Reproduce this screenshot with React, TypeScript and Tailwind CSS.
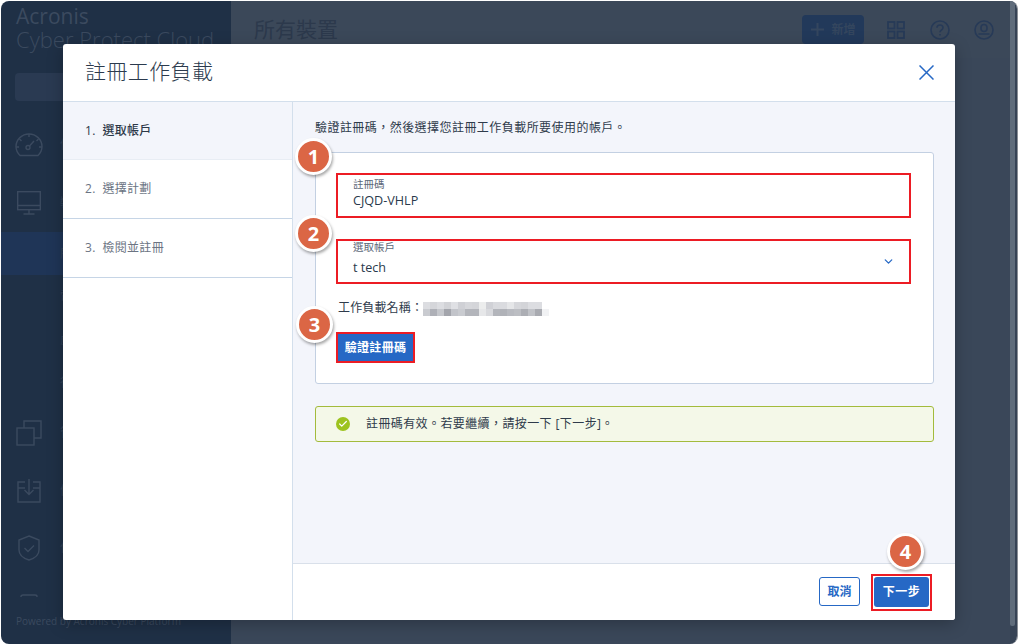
import type { ReactNode } from 'react';
import { ChevronDown, Check } from 'lucide-react';

const STEPS = [
  { label: '1.  選取帳戶', active: true, h: 'h-[58px]' },
  { label: '2.  選擇計劃', active: false, h: 'h-[59px]' },
  { label: '3.  檢閱並註冊', active: false, h: 'h-[59px]' },
];

const BLUR_TOP = [
  '#dcdde1', '#d5d6da', '#dcdde1', '#d2d3d7', '#dfe0e4', '#cfd0d5', '#d6d7db', '#d4d5d9', '#eceded',
  '#d0d1d6', '#d9dade', '#dadbdf', '#e5e6e8', '#d6d7db', '#d3d4d8', '#dcdde1', '#dcdde1', '#ffffff',
];
const BLUR_BOTTOM = [
  '#c9cbd0', '#aeb0b7', '#c5c7cc', '#a3a5ac', '#c2c4ca', '#c9cbd0', '#b3b5bb', '#b3b5bb', '#e6e7e9',
  '#d8d9dd', '#b3b5bb', '#b0b2b8', '#b8bac0', '#bcbec3', '#acaeb4', '#c0c2c7', '#a9abb1', '#f1f2f4',
];

function GaugeIcon() {
  return (
    <svg width="28" height="24" viewBox="0 0 28 24" fill="none" stroke="currentColor" strokeWidth="1.4">
      <path d="M5 22.500h18c2.500-2.500 4-5.500 4-9C27 6.500 21 1 14 1S1 6.500 1 13.500c0 3.500 1.500 6.500 4 9z" />
      <path d="M14 1v3M4.500 6l2 2M23.500 6l-2 2M1 14h3M27 14h-3" />
      <circle cx="13" cy="14.500" r="2" />
      <path d="M14.500 13l4.500-5" />
    </svg>
  );
}

function MonitorIcon() {
  return (
    <svg width="24" height="24" viewBox="0 0 24 24" fill="none" stroke="currentColor" strokeWidth="1.4">
      <rect x="0.700" y="0.700" width="22.600" height="18" />
      <path d="M1 14.500h22M12 19v3.500M6.500 23h11" />
    </svg>
  );
}

function CopyIcon() {
  return (
    <svg width="26" height="26" viewBox="0 0 26 26" fill="none" stroke="currentColor" strokeWidth="1.4">
      <path d="M8 8V1h17v17h-7" />
      <rect x="1" y="8" width="17" height="17" />
    </svg>
  );
}

function BoxIcon() {
  return (
    <svg width="24" height="24" viewBox="0 0 24 24" fill="none" stroke="currentColor" strokeWidth="1.4">
      <path d="M8 3H1v20h22V3h-7M1 9h7M16 9h7" />
      <path d="M12 0v15M7.500 11l4.500 4.500 4.500-4.500" />
    </svg>
  );
}

function ShieldIcon() {
  return (
    <svg width="22" height="26" viewBox="0 0 22 26" fill="none" stroke="currentColor" strokeWidth="1.4">
      <path d="M11 1l10 4v10c0 5-5 8.500-10 10C6 23.500 1 20 1 15V5z" />
      <path d="M6.500 13l3.500 3.500 6-6" />
    </svg>
  );
}

function StubIcon() {
  return (
    <svg width="18" height="24" viewBox="0 0 18 24" fill="none" stroke="currentColor" strokeWidth="1.4">
      <path d="M1 5V2.500C1 1.500 2 1 3 1h12c1 0 2 .5 2 1.500V5" />
    </svg>
  );
}

const NAV = [
  { id: 'dash', icon: <GaugeIcon />, label: '儀表板', h: 'h-[58px]' },
  { id: 'devices', icon: <MonitorIcon />, label: '裝置', h: 'h-[58px]' },
  { id: 'all', label: '所有裝置', h: 'h-[43px]', selected: true },
  { id: 'pc', label: '電腦', h: 'h-[43px]' },
  { id: 'vm', label: '虛擬機', h: 'h-[43px]' },
  { id: 'mobile', label: '行動', h: 'h-[43px]' },
  { id: 'manage', icon: <CopyIcon />, label: '管理', h: 'h-[58px]' },
  { id: 'backup', icon: <BoxIcon />, label: '備份', h: 'h-[57px]' },
  { id: 'protect', icon: <ShieldIcon />, label: '保護', h: 'h-[58px]' },
  { id: 'soft', icon: <StubIcon />, h: 'h-[57px]' },
];

function Callout({ n, className }: { n: number; className: string }) {
  return (
    <div
      className={`absolute flex h-[37px] w-[37px] items-center justify-center rounded-full border-[3px] border-white bg-[#db6645] text-[20px] font-bold text-white shadow-[1px_2px_3px_rgba(0,0,0,0.35)] ${className}`}
    >
      {n}
    </div>
  );
}

function Sidebar() {
  return (
    <div className="flex h-full w-[230px] shrink-0 flex-col bg-[#1f3046] text-[#3b4a5f]">
      <div className="pl-[15px] pt-[3px]">
        <div className="text-[21px] leading-[24px]">Acronis</div>
        <div className="whitespace-nowrap text-[22px] font-light leading-[22px]">Cyber Protect Cloud</div>
      </div>
      <div className="ml-[14px] mt-[23px] h-[28px] w-[200px] shrink-0 rounded bg-[#2a3a52]" />
      <div className="mt-[15px] min-h-0 flex-1 overflow-hidden">
        {NAV.map((row) => (
          <div key={row.id} className={`flex items-center ${row.h} ${row.selected ? 'bg-[#1f3557]' : ''}`}>
            <div className="flex w-[59px] shrink-0 justify-center pr-[4px]">{row.icon}</div>
            {row.label && <span className="whitespace-nowrap text-[12px] text-[#324257]">{row.label}</span>}
          </div>
        ))}
      </div>
      <div className="flex h-[47px] shrink-0 items-start pl-[15px] pt-[17px] text-[10px] leading-[14px] text-[#3b4a5f]">
        Powered by Acronis Cyber Platform
      </div>
    </div>
  );
}

function TopBar() {
  return (
    <div className="flex h-[57px] items-center justify-between bg-[#3b4859] pl-[23px] pr-[16px] text-[#273a57]">
      <div className="text-[21px] text-[#2c394c]">所有裝置</div>
      <div className="flex items-center">
        <div className="flex h-[29px] w-[62px] items-center justify-center gap-[6px] rounded bg-[#22395a] text-[12px] font-bold text-[#34465e]">
          <svg width="15" height="15" viewBox="0 0 15 15" stroke="currentColor" strokeWidth="2">
            <path d="M7.500 1v13M1 7.500h13" />
          </svg>
          新增
        </div>
        <svg className="ml-[23px]" width="18" height="18" viewBox="0 0 18 18" fill="none" stroke="currentColor" strokeWidth="1.800">
          <rect x="1" y="1" width="6.500" height="6.500" />
          <rect x="10.500" y="1" width="6.500" height="6.500" />
          <rect x="1" y="10.500" width="6.500" height="6.500" />
          <rect x="10.500" y="10.500" width="6.500" height="6.500" />
        </svg>
        <svg className="ml-[25px]" width="20" height="20" viewBox="0 0 20 20" fill="none" stroke="currentColor" strokeWidth="1.600">
          <circle cx="10" cy="10" r="9" />
          <path d="M7 7.800C7 6 8.300 5 10 5s3 1.100 3 2.700c0 2.300-3 2.300-3 4.600" />
          <path d="M10 14v1.600" />
        </svg>
        <svg className="ml-[24px]" width="20" height="20" viewBox="0 0 20 20" fill="none" stroke="currentColor" strokeWidth="1.600">
          <circle cx="10" cy="10" r="9" />
          <rect x="7" y="4.500" width="6" height="7" rx="3" />
          <path d="M4.500 14h11" />
        </svg>
      </div>
    </div>
  );
}

function Field({ label, value, labelClass, children }: { label: string; value: string; labelClass: string; children?: ReactNode }) {
  return (
    <div className="relative flex h-[45px] w-[575px] flex-col border-2 border-[#ec1c24] bg-white pl-[15px]">
      <div className={`h-[14px] text-[10.500px] leading-[14px] text-[#5c6878] ${labelClass}`}>{label}</div>
      <div className="text-[12.600px] leading-[20px] text-[#2a3a4c]">{value}</div>
      {children}
    </div>
  );
}

function Modal() {
  return (
    <div className="absolute left-[63px] top-[44px] flex h-[576px] w-[892px] flex-col overflow-hidden rounded-[3px] bg-white shadow-[0_4px_16px_rgba(0,0,0,0.25)]">
      <div className="flex h-[58px] shrink-0 items-center justify-between border-b border-[#d3dfec] pl-[22px] pr-[21px]">
        <div className="pb-[2px] text-[21px] font-light tracking-[0.400px] text-[#2b3a4d]">註冊工作負載</div>
        <svg width="15" height="15" viewBox="0 0 15 15" stroke="#2668c5" strokeWidth="1.500">
          <path d="M0.500 0.500l14 14M14.500 0.500l-14 14" />
        </svg>
      </div>
      <div className="flex min-h-0 flex-1">
        <div className="w-[230px] shrink-0 border-r border-[#d3dfec]">
          {STEPS.map((s) => (
            <div
              key={s.label}
              className={`flex items-center whitespace-pre border-b pl-[22px] text-[12px] tracking-[0.300px] ${s.h} ${
                s.active ? 'border-[#e8edf4] bg-[#f3f5fb] font-medium text-[#2c3848]' : 'border-[#c6d5e6] bg-white text-[#6b7483]'
              }`}
            >
              {s.label}
            </div>
          ))}
        </div>
        <div className="flex min-w-0 flex-1 flex-col">
          <div className="flex-1 bg-[#f3f5fb] pl-[22px] pt-[18px]">
            <div className="text-[12px] leading-[16px] tracking-[0.450px] text-[#2f3b4b]">驗證註冊碼，然後選擇您註冊工作負載所要使用的帳戶。</div>
            <div className="mt-[16px] flex h-[232px] w-[619px] flex-col rounded-[3px] border border-[#c3d0e2] bg-white pl-[20px] pt-[20px]">
              <Field label="註冊碼" value="CJQD-VHLP" labelClass="mt-[2px]" />
              <div className="mt-[21px]">
                <Field label="選取帳戶" value="t tech" labelClass="-mt-[1px] mb-[4px]">
                  <ChevronDown size={13} strokeWidth={2.4} className="absolute right-[14px] top-[14px] text-[#2668c5]" />
                </Field>
              </div>
              <div className="ml-[2px] mt-[16px] flex h-[16px] items-center whitespace-nowrap text-[12px] tracking-[0.150px] text-[#2f3b4b]">
                工作負載名稱：
                <div className="relative mt-[2px] grid w-[126px] grid-cols-[repeat(18,7px)]">
                  {BLUR_TOP.map((c, i) => (
                    <div key={i} className="h-[7px]" style={{ backgroundColor: c }} />
                  ))}
                  {BLUR_BOTTOM.map((c, i) => (
                    <div key={i} className="h-[7px]" style={{ backgroundColor: c }} />
                  ))}
                </div>
              </div>
              <div className="mt-[16px] flex h-[31px] w-[79px] items-center justify-center border-2 border-[#ec1c24] bg-[#2668c5] text-[12px] font-bold tracking-[0.300px] text-white">
                驗證註冊碼
              </div>
            </div>
            <div className="mt-[22px] flex h-[36px] w-[619px] items-center rounded-[3px] border border-[#a3bb3c] bg-[#f4f8e8] pl-[20px] text-[12px] tracking-[0.400px] text-[#2f3b4b]">
              <div className="flex h-[14px] w-[14px] items-center justify-center rounded-full bg-[#9dc31f]">
                <Check size={10} strokeWidth={3} className="text-white" />
              </div>
              <span className="ml-[16px]">註冊碼有效。若要繼續，請按一下 [下一步]。</span>
            </div>
          </div>
          <div className="flex h-[57px] shrink-0 items-center justify-end gap-[11px] border-t border-[#d9e0ea] bg-white pr-[23px]">
            <div className="mb-[1px] flex h-[29px] w-[41px] items-center justify-center rounded-[3px] border border-[#2668c5] text-[12px] font-bold text-[#2668c5]">
              取消
            </div>
            <div className="flex h-[37px] w-[61px] items-center justify-center border-2 border-[#ec1c24] text-[12px] font-bold tracking-[0.500px] text-white">
              <div className="flex h-[30px] w-[55px] items-center justify-center rounded-[3px] bg-[#2668c5]">下一步</div>
            </div>
          </div>
        </div>
      </div>
    </div>
  );
}

export default function App() {
  return (
    <div
      lang="zh-TW"
      className="relative h-[644px] w-[1023px] overflow-hidden bg-white"
      style={{ fontFamily: '"Open Sans", "Noto Sans CJK TC", sans-serif' }}
    >
      <div className="ml-[1px] mt-[1px] flex h-[643px] w-[1017px] overflow-hidden rounded-[8px] border-r border-[#8a8f96]">
        <Sidebar />
        <div className="flex min-w-0 flex-1 flex-col bg-[#3b4859]">
          <TopBar />
          <div className="flex-1 bg-[#3a4759]" />
        </div>
        <div className="w-[7px] shrink-0 bg-[#364355]">
          <div className="h-[625px] w-[5px] rounded-b-[2px] bg-[#5f6c7b]" />
        </div>
      </div>
      <Modal />
      <Callout n={1} className="left-[295px] top-[138px]" />
      <Callout n={2} className="left-[295px] top-[215px]" />
      <Callout n={3} className="left-[296px] top-[306px]" />
      <Callout n={4} className="left-[887px] top-[533px]" />
    </div>
  );
}
